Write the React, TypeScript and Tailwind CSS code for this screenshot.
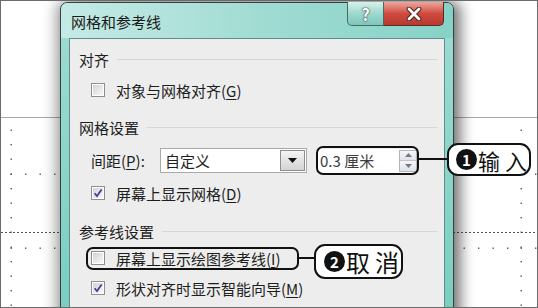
import type { ReactNode } from 'react';

const FONT = { fontFamily: '"Noto Sans CJK SC", "Noto Sans", sans-serif' };

function Grid() {
  const ys = [129, 143.5, 158, 173, 187.5, 202, 216.5, 231, 246, 260.5, 275, 289.5, 304];
  const xs = [10, 24.5, 39, 53.5, 463, 477.5, 492, 506.5, 520, 534.5];
  return (
    <svg className="absolute inset-0" width="538" height="308" viewBox="0 0 538 308">
      <line x1="0" y1="116.5" x2="538" y2="116.5" stroke="#a9a9a9" strokeWidth="1" />
      <line x1="0" y1="231.5" x2="538" y2="231.5" stroke="#555" strokeWidth="1" strokeDasharray="2 2" />
      {ys.map((y) => (
        <g key={y}>
          <rect x="9.5" y={y - 0.5} width="1.4" height="1.4" fill="#555" />
          <rect x="519.5" y={y - 0.5} width="1.4" height="1.4" fill="#555" />
        </g>
      ))}
      {[173, 247].map((y) =>
        xs.map((x) => <rect key={`${y}-${x}`} x={x - 0.5} y={y - 0.5} width="1.4" height="1.4" fill="#555" />),
      )}
    </svg>
  );
}

function Checkbox({ checked }: { checked?: boolean }) {
  return (
    <span className="flex size-[14px] shrink-0 items-center justify-center border border-[#8e8f8f] bg-white p-[1px]">
      <span className="relative block size-full bg-gradient-to-br from-[#d4d4d4] to-[#f8f8f8]">
        {checked && (
          <svg className="absolute inset-0" viewBox="0 0 10 10" width="10" height="10">
            <path d="M1.6 5.2 L4 8 L8.6 1.4" fill="none" stroke="#3f3a9c" strokeWidth="1.7" />
          </svg>
        )}
      </span>
    </span>
  );
}

function U({ children }: { children: ReactNode }) {
  return <span className="underline underline-offset-2">{children}</span>;
}

function CheckRow({ checked, children, mt }: { checked?: boolean; children: ReactNode; mt: string }) {
  return (
    <div className={`flex h-[20px] items-center gap-[11px] pl-[12px] ${mt}`}>
      <Checkbox checked={checked} />
      <span className="leading-none">{children}</span>
    </div>
  );
}

function Section({ title, mt }: { title: string; mt: string }) {
  return (
    <div className={`mr-[7px] flex h-[20px] items-center ${mt}`}>
      <span className="leading-none">{title}</span>
      <span className="ml-[8px] h-px flex-1 bg-[#d6d6d6]" />
    </div>
  );
}

export default function App() {
  return (
    <div
      className="relative h-[308px] w-[538px] overflow-hidden border border-[#6b6b6b] bg-white text-[15px] text-[#1e1e1e]"
      style={FONT}
    >
      <Grid />

      {/* dialog window */}
      <div className="absolute left-[59px] top-[1px] h-[330px] w-[394px] rounded-t-[7px] border border-[#33423f] bg-gradient-to-b from-[#9fdcd2] to-[#77cdbf] shadow-[7px_0_14px_rgba(0,0,0,0.5),-5px_0_14px_rgba(0,0,0,0.3)]">
        <div className="absolute inset-x-0 top-0 h-[35px] rounded-t-[7px] bg-gradient-to-r from-[#c4ebe5] via-[#a1dcd3] to-[#86d2c7]" />
        <div className="relative flex h-[35px] items-center pl-[10px] pt-[1px] text-[15px] leading-none text-[#1a1a1a]">
          网格和参考线
        </div>

        {/* caption buttons */}
        <div className="absolute right-[9px] top-[-1px] flex h-[24px]">
          <div className="flex w-[37px] items-center justify-center rounded-bl-[5px] border border-t-0 border-[#4a6765] bg-gradient-to-b from-[#d5f1ec] via-[#9fd8ce] to-[#7cc7bb]">
            <span className="text-[16px] font-bold leading-none text-white [text-shadow:0_0_2px_#2a3a3a,0_0_1px_#2a3a3a]">
              ?
            </span>
          </div>
          <div className="flex w-[60px] items-center justify-center rounded-br-[5px] border border-l-0 border-t-0 border-[#5a2a26] bg-gradient-to-b from-[#eaa79e] via-[#cf4a3f] to-[#b93a30]">
            <svg width="16" height="14" viewBox="0 0 16 14">
              <path d="M3 2 L13 12 M13 2 L3 12" stroke="#4a2320" strokeWidth="4.6" strokeLinecap="round" />
              <path d="M3 2 L13 12 M13 2 L3 12" stroke="#fff" strokeWidth="2.8" strokeLinecap="round" />
            </svg>
          </div>
        </div>

        {/* client area */}
        <div className="relative ml-[8px] mr-[8px] h-[290px] border border-[#5f8e88] bg-[#ededed] pl-[9px] pt-[10px]">
          <Section title="对齐" mt="" />
          <CheckRow mt="mt-[11px]">
            对象与网格对齐(<U>G</U>)
          </CheckRow>

          <Section title="网格设置" mt="mt-[17px]" />
          <div className="mt-[11px] flex h-[25px] items-center pl-[12px]">
            <span className="w-[69px] leading-none">
              间距(<U>P</U>):
            </span>
            <div className="flex h-[25px] w-[147px] items-center border border-[#a9a9a9] bg-white">
              <span className="flex-1 pl-[4px] leading-none">自定义</span>
              <div className="mr-[1px] flex h-[21px] w-[25px] items-center justify-center border border-[#8d8d8d] bg-gradient-to-b from-[#f4f4f4] to-[#d4d4d4]">
                <svg width="9" height="5" viewBox="0 0 9 5">
                  <path d="M0 0 L9 0 L4.5 5 Z" fill="#111" />
                </svg>
              </div>
            </div>
            <div className="ml-[11px] flex h-[24px] w-[99px] items-center bg-white">
              <span className="flex-1 pl-[2px] leading-none text-[#3d3d3d]">0.3 厘米</span>
              <div className="flex h-[22px] w-[18px] flex-col border border-[#b5b5b5]">
                <div className="flex flex-1 items-center justify-center border-b border-[#c4c4c4] bg-gradient-to-b from-[#f4f6f8] to-[#dfe3e8]">
                  <svg width="7" height="4" viewBox="0 0 7 4">
                    <path d="M0 4 L7 4 L3.5 0 Z" fill="#6d7b8d" />
                  </svg>
                </div>
                <div className="flex flex-1 items-center justify-center bg-gradient-to-b from-[#f4f6f8] to-[#dfe3e8]">
                  <svg width="7" height="4" viewBox="0 0 7 4">
                    <path d="M0 0 L7 0 L3.5 4 Z" fill="#6d7b8d" />
                  </svg>
                </div>
              </div>
            </div>
          </div>
          <CheckRow checked mt="mt-[10px]">
            屏幕上显示网格(<U>D</U>)
          </CheckRow>

          <Section title="参考线设置" mt="mt-[18px]" />
          <CheckRow mt="mt-[7px]">
            屏幕上显示绘图参考线(<U>I</U>)
          </CheckRow>
          <CheckRow checked mt="mt-[10px]">
            形状对齐时显示智能向导(<U>M</U>)
          </CheckRow>
        </div>
      </div>

      {/* annotations */}
      <div className="absolute left-[315px] top-[145px] h-[29px] w-[103px] rounded-[7px] border-2 border-[#111]" />
      <div className="absolute left-[418px] top-[157px] h-[2px] w-[29px] bg-[#111]" />
      <div className="absolute left-[446px] top-[142px] flex h-[33px] w-[84px] items-center whitespace-nowrap rounded-[11px] border-2 border-[#111] bg-white pl-[7px] text-[22px] leading-none text-[#111]">
        <span className="mr-[1px] flex size-[21px] shrink-0 items-center justify-center rounded-full bg-[#111] text-[15px] font-bold text-white">
          1
        </span>
        <span>输</span>
        <span className="ml-[5px]">入</span>
      </div>

      <div className="absolute left-[85px] top-[246px] h-[23px] w-[213px] rounded-[7px] border-2 border-[#111]" />
      <div className="absolute left-[297px] top-[256px] h-[2px] w-[17px] bg-[#111]" />
      <div className="absolute left-[313px] top-[243px] flex h-[35px] w-[89px] items-center whitespace-nowrap rounded-[11px] border-2 border-[#111] bg-white pl-[8px] text-[24px] leading-none text-[#111]">
        <span className="mr-[1px] flex size-[21px] shrink-0 items-center justify-center rounded-full bg-[#111] text-[15px] font-bold text-white">
          2
        </span>
        <span>取</span>
        <span className="ml-[5px]">消</span>
      </div>
    </div>
  );
}
